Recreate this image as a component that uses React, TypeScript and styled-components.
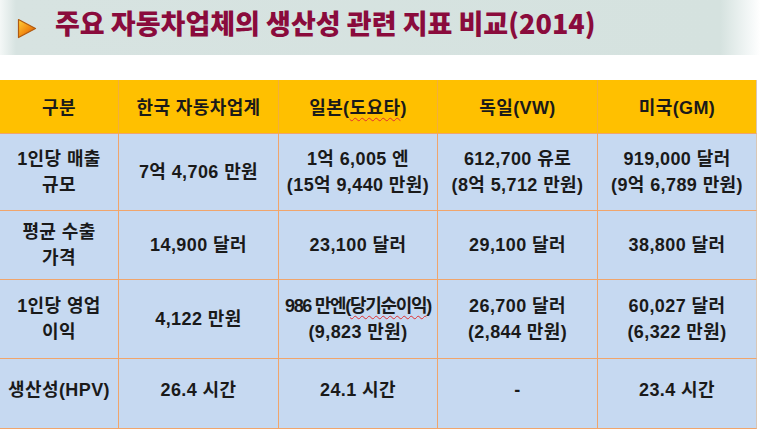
import React from "react";
import styled, { createGlobalStyle } from "styled-components";

const Global = createGlobalStyle`
  html, body { margin: 0; padding: 0; background: #ffffff; }
  body { width: 760px; height: 429px; overflow: hidden; font-family: "Liberation Sans", "Noto Sans CJK KR", sans-serif; }
`;

const Page = styled.div`
  width: 760px;
  height: 429px;
  display: flex;
  flex-direction: column;
  background: #ffffff;
`;

const TitleBar = styled.div`
  height: 57px;
  display: flex;
  align-items: center;
  gap: 18px;
  padding-left: 17px;
  background: linear-gradient(
    to right,
    #f4f8f7 0px,
    #d7e3e1 16px,
    #d5e2df 720px,
    #f6f9f9 752px,
    #ffffff 760px
  );
`;

const Title = styled.h1`
  margin: 0;
  font-family: "Noto Sans CJK KR", sans-serif;
  font-weight: 900;
  font-size: 27px;
  letter-spacing: 0px;
  color: #8a0b3c;
  line-height: 1;
  padding-bottom: 9px;
`;

const ArrowBox = styled.div`
  display: flex;
  padding-top: 2px;
`;

const Spacer = styled.div`
  height: 26px;
`;

const Table = styled.div`
  display: grid;
  grid-template-columns: 119px 160px 159px 160px 159px;
  grid-template-rows: 54px 77px 69px 79px 70px;
  width: 757px;
`;

const Cell = styled.div<{ $header?: boolean; $last?: boolean; $bottomPad?: number }>`
  display: flex;
  flex-direction: column;
  align-items: center;
  justify-content: center;
  text-align: center;
  background: ${(p) => (p.$header ? "#ffc000" : "#c6d9f1")};
  border-right: 1px solid ${(p) => (p.$last ? "#d9c6b4" : p.$header ? "#f2ae3c" : "#f0a56c")};
  border-bottom: 1px solid #f0a56c;
  padding-bottom: ${(p) => p.$bottomPad ?? 0}px;
  padding-top: ${(p) => (p.$header ? 3 : 0)}px;
  font-size: 18px;
  font-weight: 700;
  color: #1a1a1a;
  line-height: 26px;
  white-space: nowrap;
`;

const Line = styled.span<{ $tight?: boolean }>`
  display: block;
  letter-spacing: ${(p) => (p.$tight ? "-1.3px" : "0.4px")};
`;

const Squiggle = styled.span`
  text-decoration: underline wavy #e03030;
  text-decoration-thickness: 1px;
  text-underline-offset: 3px;
`;

const Arrow = () => (
  <svg width="20" height="21" viewBox="0 0 20 21">
    <defs>
      <linearGradient id="ag" x1="0" y1="0" x2="1" y2="1">
        <stop offset="0" stopColor="#ffd23a" />
        <stop offset="0.55" stopColor="#f28a12" />
        <stop offset="1" stopColor="#c04a00" />
      </linearGradient>
    </defs>
    <path d="M1.5 1.5 L18.5 10.5 L1.5 19.5 Z" fill="url(#ag)" stroke="#b05a10" strokeWidth="1.2" strokeLinejoin="round" />
  </svg>
);

type Row = { cells: React.ReactNode[][]; pad?: number };

const headers = ["구분", "한국 자동차업계", <>일본(<Squiggle>도요타</Squiggle>)</>, "독일(VW)", "미국(GM)"];

const rows: Row[] = [
  {
    cells: [
      ["1인당 매출", "규모"],
      ["7억 4,706 만원"],
      ["1억 6,005 엔", "(15억 9,440 만원)"],
      ["612,700 유로", "(8억 5,712 만원)"],
      ["919,000 달러", "(9억 6,789 만원)"],
    ],
  },
  {
    cells: [
      ["평균 수출", "가격"],
      ["14,900 달러"],
      ["23,100 달러"],
      ["29,100 달러"],
      ["38,800 달러"],
    ],
  },
  {
    cells: [
      ["1인당 영업", "이익"],
      ["4,122 만원"],
      ["__tight__", "(9,823 만원)"],
      ["26,700 달러", "(2,844 만원)"],
      ["60,027 달러", "(6,322 만원)"],
    ],
  },
  {
    pad: 8,
    cells: [["생산성(HPV)"], ["26.4 시간"], ["24.1 시간"], ["-"], ["23.4 시간"]],
  },
];

export default function App() {
  return (
    <Page>
      <Global />
      <TitleBar>
        <ArrowBox>
          <Arrow />
        </ArrowBox>
        <Title>주요 자동차업체의 생산성 관련 지표 비교(2014)</Title>
      </TitleBar>
      <Spacer />
      <Table>
        {headers.map((h, i) => (
          <Cell key={`h${i}`} $header $last={i === 4}>
            <Line>{h}</Line>
          </Cell>
        ))}
        {rows.map((r, ri) =>
          r.cells.map((lines, ci) => (
            <Cell key={`${ri}-${ci}`} $last={ci === 4} $bottomPad={r.pad}>
              {lines.map((l, li) =>
                l === "__tight__" ? (
                  <Line key={li} $tight>
                    986 만엔(<Squiggle>당기순이익</Squiggle>)
                  </Line>
                ) : (
                  <Line key={li}>{l}</Line>
                )
              )}
            </Cell>
          ))
        )}
      </Table>
    </Page>
  );
}
